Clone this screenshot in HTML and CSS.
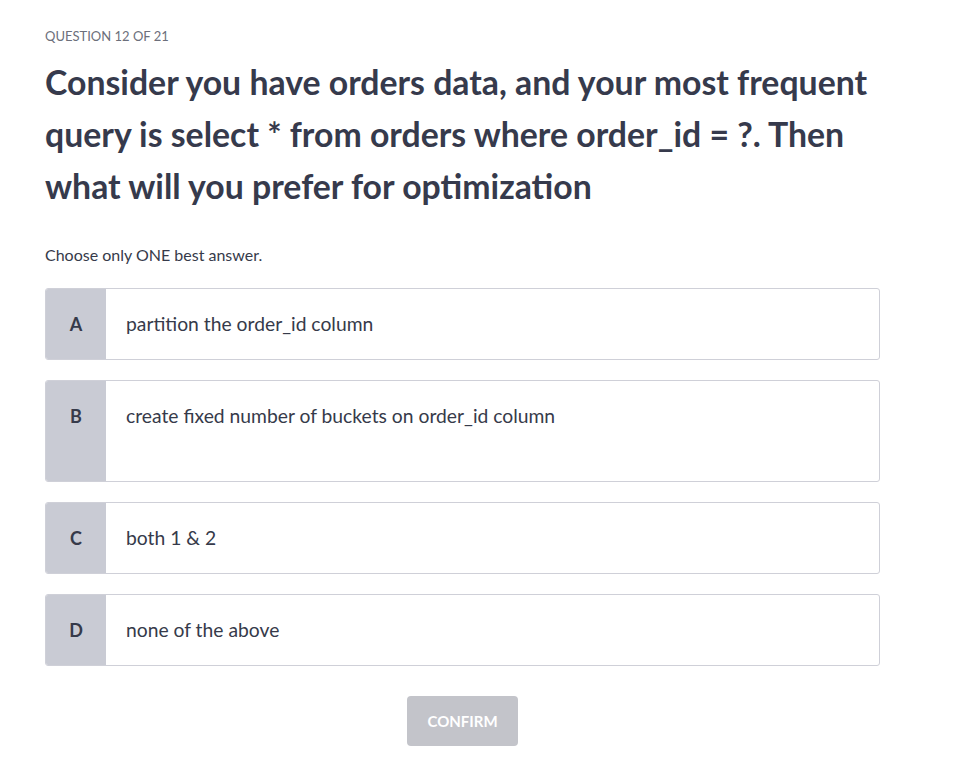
FILE: index.html
```html
<!DOCTYPE html>
<html lang="en">
<head>
<meta charset="utf-8">
<title>Question 12 of 21</title>
<link rel="stylesheet" href="styles.css">
</head>
<body>
<main class="quiz">
  <div class="counter">QUESTION 12 OF 21</div>
  <h1 class="question">Consider you have orders data, and your most frequent query is select * from orders where order_id = ?. Then what will you prefer for optimization</h1>
  <p class="hint">Choose only ONE best answer.</p>
  <div class="options">
    <div class="option"><div class="letter">A</div><div class="text">partition the order_id column</div></div>
    <div class="option"><div class="letter">B</div><div class="text">create fixed number of buckets on order_id column<br><br></div></div>
    <div class="option"><div class="letter">C</div><div class="text">both 1 &amp; 2</div></div>
    <div class="option"><div class="letter">D</div><div class="text">none of the above</div></div>
  </div>
  <div class="actions"><button class="confirm" disabled>CONFIRM</button></div>
</main>
</body>
</html>
```
FILE: styles.css
```css
* { box-sizing: border-box; }
html, body { margin: 0; padding: 0; background: #fff; }
body { font-family: Lato, "Noto Sans", sans-serif; color: #363a4a; }
.quiz { width: 835px; margin-left: 45px; padding-top: 28px; }
.counter { font-size: 13px; color: #6c6f7b; line-height: 16px; }
.question { font-size: 33.8px; font-weight: 700; line-height: 52px; margin: 12px 0 0; color: #363a4c; }
.hint { font-size: 16px; margin: 32px 0 0; line-height: 22px; color: #363a4a; }
.options { margin-top: 22px; display: flex; flex-direction: column; gap: 20px; }
.option { display: flex; border: 1px solid #cfd0d8; border-radius: 3px; overflow: hidden; }
.letter { width: 60px; flex: none; background: #c9cbd4; text-align: center; font-weight: 700; font-size: 18px; padding-top: 20px; line-height: 30px; color: #363a4a; }
.text { padding: 20px; font-size: 19.3px; line-height: 30px; color: #363a4a; }
.actions { display: flex; justify-content: center; margin-top: 30px; }
.confirm { width: 111px; height: 50px; border: none; border-radius: 4px; background: #c3c4ca; color: #fff; font-family: inherit; font-weight: 700; font-size: 15px; }
```
